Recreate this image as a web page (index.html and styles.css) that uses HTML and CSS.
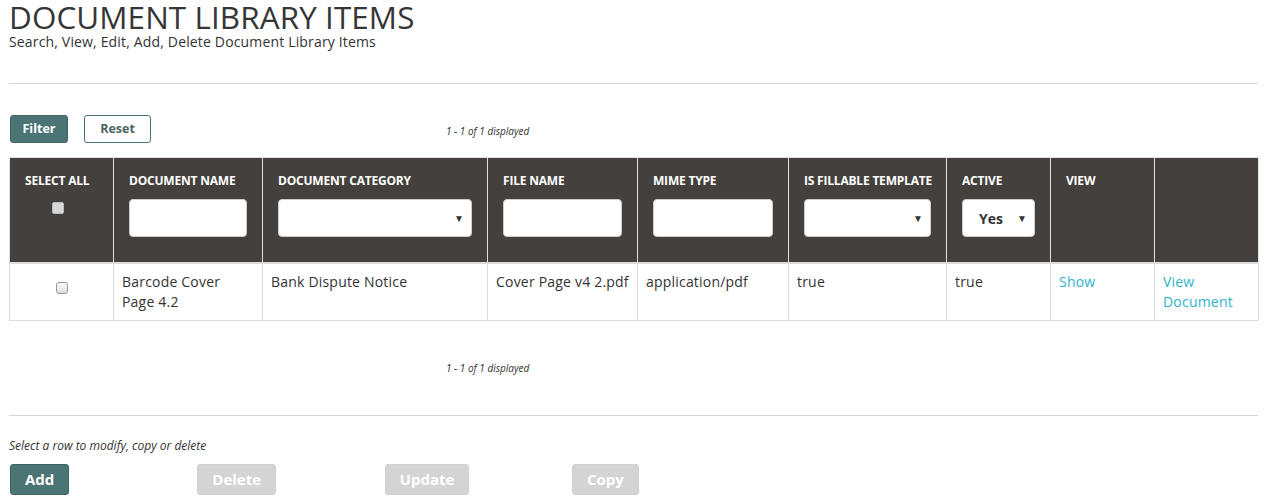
FILE: index.html
```html
<!DOCTYPE html>
<html>
<head>
<meta charset="utf-8">
<link rel="stylesheet" href="styles.css">
</head>
<body>
<div class="page">
  <header class="page-head">
    <h1 class="title">DOCUMENT LIBRARY ITEMS</h1>
    <p class="subtitle">Search, View, Edit, Add, Delete Document Library Items</p>
  </header>
  <hr class="rule rule-top">
  <div class="toolbar">
    <button class="btn btn-primary btn-filter">Filter</button>
    <button class="btn btn-outline">Reset</button>
    <span class="pager">1 - 1 of 1 displayed</span>
  </div>
  <table class="grid">
    <colgroup>
      <col style="width:104px"><col style="width:149px"><col style="width:225px"><col style="width:150px"><col style="width:151px"><col style="width:158px"><col style="width:104px"><col style="width:104px"><col style="width:104px">
    </colgroup>
    <thead>
      <tr>
        <th><div class="th-label">SELECT ALL</div><div class="chk-wrap"><span class="chk chk-head"></span></div></th>
        <th><div class="th-label">DOCUMENT NAME</div><div class="field"></div></th>
        <th><div class="th-label">DOCUMENT CATEGORY</div><div class="field select"><span class="caret">▼</span></div></th>
        <th><div class="th-label">FILE NAME</div><div class="field"></div></th>
        <th><div class="th-label">MIME TYPE</div><div class="field"></div></th>
        <th><div class="th-label">IS FILLABLE TEMPLATE</div><div class="field select"><span class="caret">▼</span></div></th>
        <th><div class="th-label">ACTIVE</div><div class="field select small"><span class="sel-val">Yes</span><span class="caret">▼</span></div></th>
        <th><div class="th-label">VIEW</div></th>
        <th></th>
      </tr>
    </thead>
    <tbody>
      <tr>
        <td class="center-cell"><span class="chk"></span></td>
        <td>Barcode Cover Page 4.2</td>
        <td>Bank Dispute Notice</td>
        <td>Cover Page v4 2.pdf</td>
        <td>application/pdf</td>
        <td>true</td>
        <td>true</td>
        <td><a class="link" href="#">Show</a></td>
        <td><a class="link" href="#">View Document</a></td>
      </tr>
    </tbody>
  </table>
  <div class="pager-row"><span class="pager">1 - 1 of 1 displayed</span></div>
  <hr class="rule rule-bottom">
  <p class="hint">Select a row to modify, copy or delete</p>
  <div class="actions">
    <div class="action-cell"><button class="btn btn-primary btn-lg">Add</button></div>
    <div class="action-cell"><button class="btn btn-disabled btn-lg">Delete</button></div>
    <div class="action-cell"><button class="btn btn-disabled btn-lg">Update</button></div>
    <div class="action-cell"><button class="btn btn-disabled btn-lg">Copy</button></div>
  </div>
</div>
</body>
</html>
```
FILE: styles.css
```css
* { box-sizing: border-box; }
html, body { margin: 0; padding: 0; background: #fff; }
body { font-family: "Open Sans", "Liberation Sans", sans-serif; color: #333; }
.page { padding: 0 8px 0 9px; }
.title { margin: 0; font-size: 31.4px; font-weight: 400; line-height: 34px; color: #363636; letter-spacing: 0.1px; }
.subtitle { margin: 0; font-size: 14px; line-height: 16px; color: #333; letter-spacing: 0.16px; }
.rule { border: 0; border-top: 1px solid #d6d6d6; margin: 0; }
.rule-top { margin-top: 33px; }
.toolbar { display: flex; align-items: center; margin-top: 31px; padding-left: 1px; height: 28px; }
.btn { font-family: "Open Sans", "Liberation Sans", sans-serif; font-weight: 700; font-size: 12.5px; border-radius: 3px; height: 28px; padding: 0; margin: 0; cursor: pointer; line-height: 1; text-align: center; }
.btn-primary { background: #4b7474; color: #fff; border: 1px solid #3f6464; }
.btn-filter { width: 58px; }
.btn-outline { background: #fff; color: #4b6363; border: 1px solid #4b7474; margin-left: 16px; width: 67px; }
.btn-disabled { background: #d4d4d4; color: #fff; border: 1px solid #d0d0d0; }
.btn-lg { height: 31px; font-size: 15px; padding: 0 14px; }
.pager { font-size: 10px; font-style: italic; color: #333; margin-left: 295px; padding-top: 4px; }
.grid { border-collapse: collapse; table-layout: fixed; width: 1249px; margin-top: 14px; }
.grid th, .grid td { border: 1px solid #dcdcdc; text-align: left; vertical-align: top; }
.grid thead th { background: #43403d; color: #fff; height: 105px; padding: 15px 15px 0 15px; font-size: 12px; font-weight: 700; border-color: #e0e0e0; border-bottom: 2px solid #dcdcdc; }
.th-label { line-height: 16px; height: 16px; white-space: nowrap; letter-spacing: -0.2px; }
.chk-wrap { text-align: center; margin-left: -8px; }
.field { margin-top: 10px; height: 38px; background: #fff; border-radius: 4px; border: 1px solid #ccc; position: relative; color: #333; }
.field.small { width: 73px; }
.caret { position: absolute; right: 7px; top: 11px; font-size: 10px; color: #333; }
.sel-val { position: absolute; left: 16px; top: 9px; font-size: 14px; font-weight: 700; }
.chk { display: inline-block; width: 12px; height: 12px; border: 1px solid #9a9a9a; border-radius: 3px; background: linear-gradient(#fafafa, #dedede); }
.chk-head { margin-top: 13px; border-radius: 2px; background: #d8d8d8; border-color: #bbb; }
.grid tbody td { padding: 8px 8px 8px 8px; font-size: 14px; line-height: 20px; height: 58px; letter-spacing: 0.2px; }
.grid tbody td.center-cell { text-align: center; padding-top: 15px; }
.link { color: #2fb3cb; text-decoration: none; }
.pager-row { height: 94px; padding-top: 34px; }
.pager-row .pager { margin-left: 437px; padding-top: 0; }
.hint { margin: 0; margin-top: 21px; font-size: 12px; font-style: italic; line-height: 18px; }
.actions { display: grid; grid-template-columns: repeat(4, 187.3px); margin-top: 9px; padding-left: 1px; }
```
